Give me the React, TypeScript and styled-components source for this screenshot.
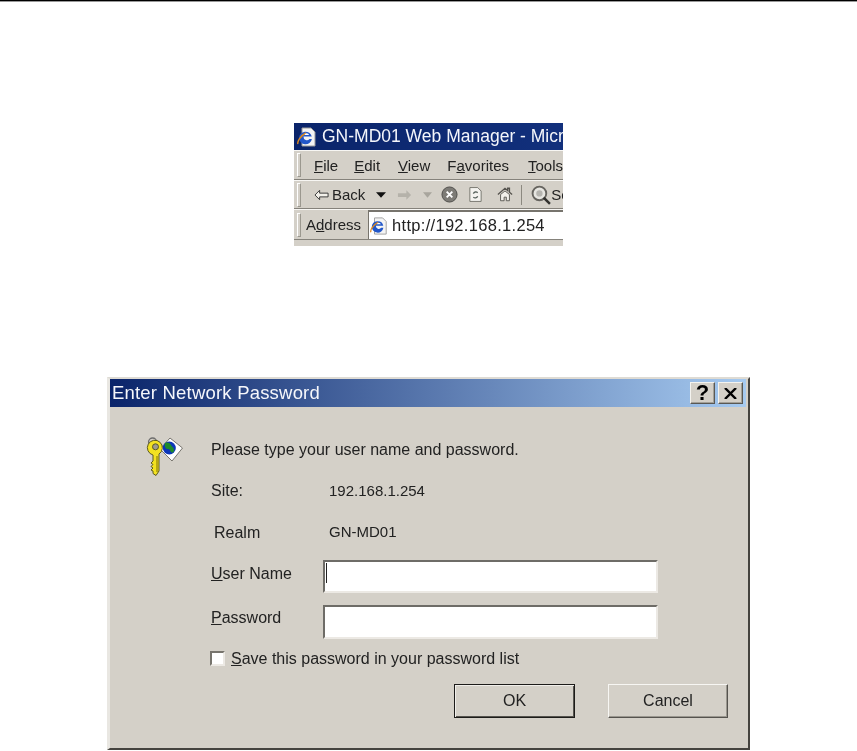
import React from 'react';
import styled, { createGlobalStyle } from 'styled-components';

const GlobalStyle = createGlobalStyle`
  html, body {
    margin: 0;
    padding: 0;
    background: #fff;
    font-family: "Liberation Sans", Arial, sans-serif;
  }
`;

const Page = styled.div`
  width: 857px;
  height: 751px;
  overflow: hidden;
`;

const TopRule = styled.div`
  height: 2px;
  background: linear-gradient(#000 0, #000 1px, #777 1px, #bbb 2px);
`;

/* browser chrome crop */
const BrowserShot = styled.div`
  width: 269px;
  height: 123px;
  margin: 121px 0 0 294px;
  background: #d4d0c8;
  overflow: hidden;
  white-space: nowrap;
  color: #222;
  font-size: 15px;
  filter: blur(0.35px);
`;

const BrowserTitle = styled.div`
  height: 27px;
  background: linear-gradient(90deg, #0a246a, #12307c);
  color: #f4f6fb;
  font-size: 17.5px;
  display: flex;
  align-items: center;
  padding-left: 3px;
  gap: 5px;
`;

const ToolRow = styled.div<{ $height: number }>`
  height: ${p => p.$height}px;
  display: flex;
  align-items: center;
  border-top: 1px solid #f7f6f3;
  border-bottom: 1px solid #85827b;
  box-sizing: border-box;
  padding-left: 3px;
`;

const Grip = styled.span`
  flex: none;
  width: 2px;
  height: 22px;
  border: 1px solid #9b988f;
  border-top-color: #fff;
  border-left-color: #fff;
`;

const MenuItem = styled.span<{ $left: number }>`
  margin-left: ${p => p.$left}px;
`;

const BackLabel = styled.span`
  margin-left: 3px;
`;

const ToolIcon = styled.svg<{ $left: number }>`
  flex: none;
  margin-left: ${p => p.$left}px;
`;

const Divider = styled.span`
  flex: none;
  width: 1px;
  height: 20px;
  background: #8c8980;
  margin-left: 8px;
`;

const AddressLabel = styled.span`
  margin-left: 5px;
`;

const AddressBox = styled.div`
  flex: 1;
  height: 27px;
  margin-left: 7px;
  background: #fff;
  border-top: 2px solid #77746d;
  border-left: 1px solid #77746d;
  display: flex;
  align-items: center;
  padding-left: 1px;
  gap: 4px;
  font-size: 16.5px;
  letter-spacing: 0.3px;
`;

/* password dialog */
const Dialog = styled.div`
  width: 643px;
  height: 373px;
  margin: 131px 0 0 107px;
  box-sizing: border-box;
  background: #d4d0c8;
  border-top: 2px solid #dedbd4;
  border-left: 3px solid #e9e7e2;
  border-right: 2px solid #45433f;
  border-bottom: 2px solid #45433f;
  color: #222;
  font-size: 16px;
  filter: blur(0.3px);
`;

const TitleBar = styled.div`
  height: 28px;
  margin-right: 2px;
  background: linear-gradient(90deg, #0a246a, #a6caf0);
  color: #f6f7fb;
  font-size: 18.5px;
  display: flex;
  align-items: center;
  padding: 0 3px 0 2px;
`;

const TitleText = styled.span`
  flex: 1;
  letter-spacing: 0.2px;
`;

const CaptionButton = styled.button<{ $left?: number }>`
  width: 25px;
  height: 22px;
  margin-left: ${p => p.$left ?? 0}px;
  padding: 0;
  background: #d4d0c8;
  border: 1px solid;
  border-color: #f4f3ef #5a5853 #5a5853 #f4f3ef;
  box-shadow: inset -1px -1px 0 #a3a098;
  color: #000;
  font: bold 22px "Liberation Sans", Arial, sans-serif;
  line-height: 20px;
`;

const CloseGlyph = styled.svg`
  display: block;
  margin: 0 auto;
`;

const DialogBody = styled.div`
  padding: 30px 0 0 101px;
`;

const Intro = styled.div`
  height: 40px;
  display: flex;
`;

const KeyIcon = styled.svg`
  flex: none;
  margin-left: -66px;
  margin-right: 28px;
`;

const Prompt = styled.div`
  margin-top: 4px;
`;

const InfoRow = styled.div<{ $top: number }>`
  height: 22px;
  margin-top: ${p => p.$top}px;
  display: flex;
  align-items: center;
`;

const InfoLabel = styled.span<{ $indent?: number; $shift?: number }>`
  width: ${p => 118 - (p.$indent ?? 0)}px;
  padding-left: ${p => p.$indent ?? 0}px;
  transform: translateY(${p => p.$shift ?? 0}px);
`;

const InfoValue = styled.span`
  font-size: 15px;
`;

const FieldRow = styled.label<{ $top: number; $height: number }>`
  height: ${p => p.$height}px;
  margin-top: ${p => p.$top}px;
  display: flex;
  align-items: center;
`;

const FieldLabel = styled.span<{ $shift: number }>`
  width: 112px;
  transform: translateY(${p => p.$shift}px);
`;

const TextBox = styled.input`
  width: 335px;
  height: 100%;
  box-sizing: border-box;
  padding: 0 0 0 3px;
  background: #fff;
  border: 2px solid;
  border-color: #6e6c67 #ece9e4 #ece9e4 #6e6c67;
  border-radius: 0;
  outline: none;
`;

const FocusedBox = styled.div`
  width: 335px;
  height: 100%;
  box-sizing: border-box;
  background: #fff;
  border: 2px solid;
  border-color: #6e6c67 #ece9e4 #ece9e4 #6e6c67;
  display: flex;
  align-items: flex-start;
  padding: 1px 0 0 1px;

  &::before {
    content: "";
    width: 1px;
    height: 20px;
    background: #222;
  }
`;

const SaveRow = styled.label`
  height: 18px;
  margin: 10px 0 0 -1px;
  display: flex;
  align-items: center;
  gap: 6px;
`;

const SaveText = styled.span`
  transform: translateY(1px);
`;

const CheckBox = styled.span`
  width: 11px;
  height: 11px;
  background: #fff;
  border: 2px solid;
  border-color: #77746d #ece9e4 #ece9e4 #77746d;
`;

const ButtonRow = styled.div`
  height: 34px;
  margin: 17px 0 0 243px;
  display: flex;
  gap: 33px;
`;

const PushButton = styled.button<{ $primary?: boolean }>`
  width: ${p => (p.$primary ? 121 : 120)}px;
  height: 34px;
  padding: 0;
  background: #d4d0c8;
  color: #222;
  font: 16px "Liberation Sans", Arial, sans-serif;
  border: 1px solid;
  border-color: ${p => (p.$primary ? '#1c1b19' : '#f7f6f3 #55534e #55534e #f7f6f3')};
  box-shadow: ${p =>
    p.$primary
      ? 'inset 1px 1px 0 #f0eeea, inset -1px -1px 0 #55534e'
      : 'inset -1px -1px 0 #9a978f'};
`;

const IeIcon: React.FC<{ size: number }> = ({ size }) => (
  <svg width={size} height={size} viewBox="0 0 20 20" style={{ flex: 'none' }}>
    <path d="M5 1h9l4 4v14H5z" fill="#f4f4f4" stroke="#9a9a9a" />
    <path d="M2 11a6.5 6.5 0 0 1 12.8-1.4H6.5a3.4 3.4 0 0 0 6 2.4h2.4A6.5 6.5 0 0 1 2 11z" fill="#2257c9" />
    <path d="M1 17c-1-2 2-8 8-11" fill="none" stroke="#e08a1e" strokeWidth="1.4" />
    <path d="M7.5 8h4.6a2.4 2.4 0 0 0-4.6 0z" fill="#fff" />
  </svg>
);

const KeyGlobe: React.FC = () => (
  <KeyIcon width="38" height="40" viewBox="0 0 38 40">
    <path d="M25 1L37.500 11 27 24 15 12z" fill="#fff" stroke="#77746d" />
    <circle cx="24.300" cy="11" r="6.500" fill="#0c36b8" />
    <path d="M20 6c3-1 5 0 6 2s3 2 3 5-2 3-3 2-1-3-3-3-4-2-3-6z" fill="#1f8a2c" />
    <circle cx="7.600" cy="5" r="4" fill="none" stroke="#6d6d6d" strokeWidth="1.400" />
    <path
      d="M14 17V34l-3 4.500-3-2V34l-2-1 2-2-2-1.500 2-2-2-1.500 2-2V18A7.500 7.500 0 1 1 14 17z"
      fill="#f3e221"
      stroke="#5c5a20"
    />
    <circle cx="10.500" cy="9.800" r="3" fill="#9c9a90" stroke="#5c5a20" />
    <path d="M12 19v16" stroke="#a99a12" strokeWidth="1.600" />
  </KeyIcon>
);

const App: React.FC = () => (
  <Page>
    <GlobalStyle />
    <TopRule />

    <BrowserShot>
      <BrowserTitle>
        <IeIcon size={20} />
        GN-MD01 Web Manager - Microsoft Internet Explorer
      </BrowserTitle>
      <ToolRow $height={30}>
        <Grip />
        <MenuItem $left={13}><u>F</u>ile</MenuItem>
        <MenuItem $left={16}><u>E</u>dit</MenuItem>
        <MenuItem $left={18}><u>V</u>iew</MenuItem>
        <MenuItem $left={17}>F<u>a</u>vorites</MenuItem>
        <MenuItem $left={19}><u>T</u>ools</MenuItem>
      </ToolRow>
      <ToolRow $height={29}>
        <Grip />
        <ToolIcon $left={13} width="15" height="12" viewBox="0 0 16 12">
          <path d="M6 1L1 6l5 5V8h9V4H6z" fill="#f2f0ea" stroke="#333" />
        </ToolIcon>
        <BackLabel>Back</BackLabel>
        <ToolIcon $left={11} width="10" height="6" viewBox="0 0 11 6">
          <path d="M0 0h11L5.500 6z" fill="#111" />
        </ToolIcon>
        <ToolIcon $left={11} width="15" height="12" viewBox="0 0 16 12">
          <path d="M10 1l5 5-5 5V8H1V4h9z" fill="#b5b2aa" />
        </ToolIcon>
        <ToolIcon $left={11} width="9" height="6" viewBox="0 0 10 6">
          <path d="M0 0h10L5 6z" fill="#a8a59d" />
        </ToolIcon>
        <ToolIcon $left={9} width="17" height="17" viewBox="0 0 18 18">
          <circle cx="9" cy="9" r="8" fill="#7d7b76" stroke="#4c4b48" />
          <path d="M6 6l6 6M12 6l-6 6" stroke="#fff" strokeWidth="2" />
        </ToolIcon>
        <ToolIcon $left={11} width="13" height="17" viewBox="0 0 15 18">
          <path d="M1 1h9l4 4v12H1z" fill="#f4f3ef" stroke="#6b6962" />
          <path d="M5 8a3 3 0 0 1 5-1M10 11a3 3 0 0 1-5 1" fill="none" stroke="#55605a" strokeWidth="1.500" />
        </ToolIcon>
        <ToolIcon $left={15} width="16" height="17" viewBox="0 0 18 18">
          <path d="M1 9l8-7 3 2.500V2h2v4.500L17 9" fill="none" stroke="#55534e" strokeWidth="1.500" />
          <path d="M4 9v7h4v-4h2.500v4H14V9L9 5z" fill="#f1efe9" stroke="#55534e" />
        </ToolIcon>
        <Divider />
        <ToolIcon $left={9} width="20" height="20" viewBox="0 0 19 19">
          <circle cx="8" cy="8" r="6.500" fill="#e6e5e0" stroke="#66645f" strokeWidth="1.800" />
          <circle cx="8" cy="8" r="3" fill="#b5b4af" />
          <path d="M12 12l6 6" stroke="#33322f" strokeWidth="2.400" />
        </ToolIcon>
        <span>Search</span>
      </ToolRow>
      <ToolRow $height={31}>
        <Grip />
        <AddressLabel>A<u>d</u>dress</AddressLabel>
        <AddressBox>
          <IeIcon size={18} />
          http://192.168.1.254
        </AddressBox>
      </ToolRow>
    </BrowserShot>

    <Dialog>
      <TitleBar>
        <TitleText>Enter Network Password</TitleText>
        <CaptionButton>?</CaptionButton>
        <CaptionButton $left={3}>
          <CloseGlyph width="13" height="11" viewBox="0 0 13 11">
            <path d="M1 0l11 11M12 0L1 11" stroke="#000" strokeWidth="2.400" />
          </CloseGlyph>
        </CaptionButton>
      </TitleBar>
      <DialogBody>
        <Intro>
          <KeyGlobe />
          <Prompt>Please type your user name and password.</Prompt>
        </Intro>
        <InfoRow $top={2}>
          <InfoLabel $shift={1}>Site:</InfoLabel>
          <InfoValue>192.168.1.254</InfoValue>
        </InfoRow>
        <InfoRow $top={19}>
          <InfoLabel $indent={3} $shift={2}>Realm</InfoLabel>
          <InfoValue>GN-MD01</InfoValue>
        </InfoRow>
        <FieldRow $top={18} $height={33}>
          <FieldLabel $shift={-3}><u>U</u>ser Name</FieldLabel>
          <FocusedBox />
        </FieldRow>
        <FieldRow $top={12} $height={34}>
          <FieldLabel $shift={-4}><u>P</u>assword</FieldLabel>
          <TextBox type="password" />
        </FieldRow>
        <SaveRow>
          <CheckBox />
          <SaveText><u>S</u>ave this password in your password list</SaveText>
        </SaveRow>
        <ButtonRow>
          <PushButton $primary>OK</PushButton>
          <PushButton>Cancel</PushButton>
        </ButtonRow>
      </DialogBody>
    </Dialog>
  </Page>
);

export default App;
